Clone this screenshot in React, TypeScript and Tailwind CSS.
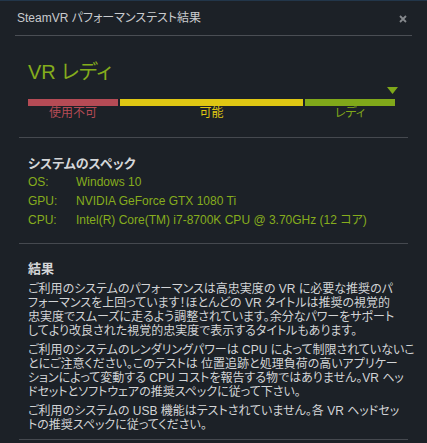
const font = "font-['Liberation_Sans','Noto_Sans_CJK_JP',sans-serif] [font-feature-settings:'palt']";

const specs = [
  { label: 'OS:', value: 'Windows 10' },
  { label: 'GPU:', value: 'NVIDIA GeForce GTX 1080 Ti' },
  { label: 'CPU:', value: 'Intel(R) Core(TM) i7-8700K CPU @ 3.70GHz (12 コア)' },
];

const paragraphs = [
  [
    'ご利用のシステムのパフォーマンスは高忠実度の VR に必要な推奨のパ',
    'フォーマンスを上回っています！ほとんどの VR タイトルは推奨の視覚的',
    '忠実度でスムーズに走るよう調整されています。余分なパワーをサポート',
    'してより改良された視覚的忠実度で表示するタイトルもあります。',
  ],
  [
    'ご利用のシステムのレンダリングパワーは CPU によって制限されていないこ',
    'とにご注意ください。このテストは 位置追跡と処理負荷の高いアプリケー',
    'ションによって変動する CPU コストを報告する物ではありません。VR ヘッ',
    'ドセットとソフトウェアの推奨スペックに従って下さい。',
  ],
  [
    'ご利用のシステムの USB 機能はテストされていません。各 VR ヘッドセッ',
    'トの推奨スペックに従ってください。',
  ],
];

export default function App() {
  return (
    <div className={`${font} h-[443px] w-[427px] overflow-hidden border-t border-[#22364a] bg-[#1c2127] text-[12px] text-[#d2d4d6]`}>
      <div className="mx-[15px] flex h-[35px] items-center justify-between border-b border-[#4a4e54] pl-[2px] pr-[5px]">
        <span className="text-[12px] text-[#c9cbce]">SteamVR パフォーマンステスト結果</span>
        <svg width="8" height="8" viewBox="0 0 8 8" className="mt-[1px]">
          <path d="M1 1L7 7M7 1L1 7" stroke="#85898d" strokeWidth="1.8" />
        </svg>
      </div>

      <div className="mx-[19px] border-b border-[#45494f] pb-[17px] pl-[9px] pt-[22px]">
        <div className="text-[20px] leading-[28px] text-[#84ac1c]">VR レディ</div>
        <div className="relative mt-[13px] w-[367px]">
          <svg width="11" height="7" viewBox="0 0 11 7" className="absolute right-[-3px] top-[-12px]">
            <polygon points="0,0 11,0 5.5,7" fill="#7fa81a" />
          </svg>
          <div className="flex h-[7px] gap-[2px]">
            <div className="w-[90px] bg-[#b54b55]" />
            <div className="w-[183px] bg-[#dfc713]" />
            <div className="w-[90px] bg-[#80a81a]" />
          </div>
          <div className="flex gap-[2px] leading-[14px]">
            <div className="w-[90px] text-center text-[#b54b55]">使用不可</div>
            <div className="w-[183px] text-center text-[#dfc713]">可能</div>
            <div className="w-[90px] text-center text-[#80a81a]">レディ</div>
          </div>
        </div>
      </div>

      <div className="mx-[19px] border-b border-[#45494f] pb-[13px] pl-[9px] pt-[17px]">
        <div className="text-[13px] font-bold leading-[18px] text-[#d4d6d8]">システムのスペック</div>
        {specs.map((s) => (
          <div key={s.label} className="flex leading-[19px] text-[#86ad1d]">
            <span className="w-[48px]">{s.label}</span>
            <span>{s.value}</span>
          </div>
        ))}
      </div>

      <div className="mx-[19px] h-[196px] border-b border-[#45494f] pl-[9px] pt-[16px]">
        <div className="mb-[4px] text-[13px] font-bold leading-[18px] text-[#d4d6d8]">結果</div>
        <div className="flex flex-col gap-[5px]">
          {paragraphs.map((p, i) => (
            <div key={i} className="leading-[14px]">
              {p.map((line) => (
                <div key={line} className="whitespace-nowrap">{line}</div>
              ))}
            </div>
          ))}
        </div>
      </div>
    </div>
  );
}
